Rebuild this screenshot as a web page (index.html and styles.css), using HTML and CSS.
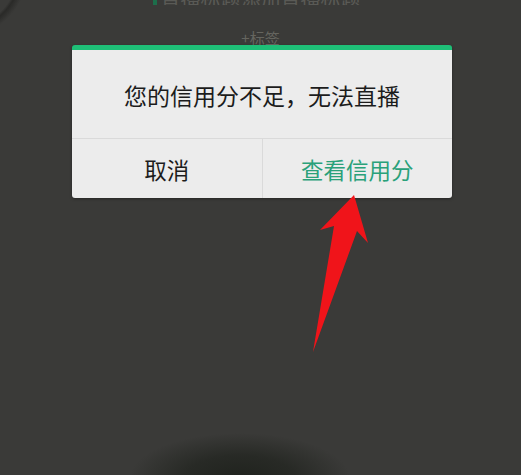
FILE: index.html
```html
<!DOCTYPE html>
<html lang="zh-CN">
<head>
<meta charset="utf-8">
<title>信用分不足</title>
<link rel="stylesheet" href="styles.css">
</head>
<body>
<div class="screen">
  <div class="cut"><span class="mark"></span><span class="cut-text">直播标题添加直播标题</span></div>
  <div class="tag">+标签</div>

  <div class="dialog">
    <div class="dialog-msg">您的信用分不足，无法直播</div>
    <div class="dialog-actions">
      <div class="btn btn-cancel">取消</div>
      <div class="btn btn-ok">查看信用分</div>
    </div>
  </div>

  <svg class="arrow" width="521" height="475" viewBox="0 0 521 475">
    <polygon points="354,195 368,243 357,231 313,352 334,226 320,230" fill="#f0141a"/>
  </svg>
</div>
</body>
</html>
```

FILE: styles.css
```css
html, body {
  margin: 0;
  padding: 0;
}
body {
  width: 521px;
  height: 475px;
  overflow: hidden;
  font-family: "Noto Sans CJK SC", "Noto Sans", sans-serif;
  background:
    radial-gradient(ellipse 110px 45px at 240px 478px, #20231e 0%, rgba(32,35,30,0.7) 50%, rgba(32,35,30,0) 100%),
    radial-gradient(circle at -40px -30px, rgba(0,0,0,0) 58px, rgba(40,40,38,0.9) 61px, rgba(44,44,42,0) 68px),
    #3a3a38;
}
.screen {
  position: relative;
  height: 475px;
  display: flex;
  flex-direction: column;
  align-items: center;
}
.cut {
  height: 5px;
  overflow: hidden;
  display: flex;
  align-items: flex-end;
  gap: 4px;
  margin-left: -8px;
  line-height: 20px;
  font-size: 20px;
}
.mark {
  width: 4px;
  height: 20px;
  background: #1d6e4b;
}
.cut-text {
  color: #5a5a56;
  margin-bottom: -4px;
}
.tag {
  margin-top: 23px;
  font-size: 15px;
  line-height: 20px;
  color: #65655f;
}
.dialog {
  position: absolute;
  left: 72px;
  top: 45px;
  width: 380px;
  height: 153px;
  background: #ececec;
  border-top: 5px solid #1ebf77;
  border-radius: 3px;
  box-sizing: border-box;
  display: flex;
  flex-direction: column;
  box-shadow: 0 1px 3px rgba(0,0,0,0.35);
}
.dialog-msg {
  height: 89px;
  display: flex;
  align-items: center;
  justify-content: center;
  font-size: 23px;
  color: #1c1c1c;
  border-bottom: 1px solid #dadada;
  box-sizing: border-box;
  padding-top: 2px;
}
.dialog-actions {
  flex: 1;
  display: flex;
}
.btn {
  flex: 1;
  display: flex;
  align-items: center;
  justify-content: center;
  font-size: 22.5px;
}
.btn-cancel {
  color: #1c1c1c;
  border-right: 1px solid #dadada;
}
.btn-ok {
  color: #2aa17a;
}
.arrow {
  position: absolute;
  left: 0;
  top: 0;
}
```
